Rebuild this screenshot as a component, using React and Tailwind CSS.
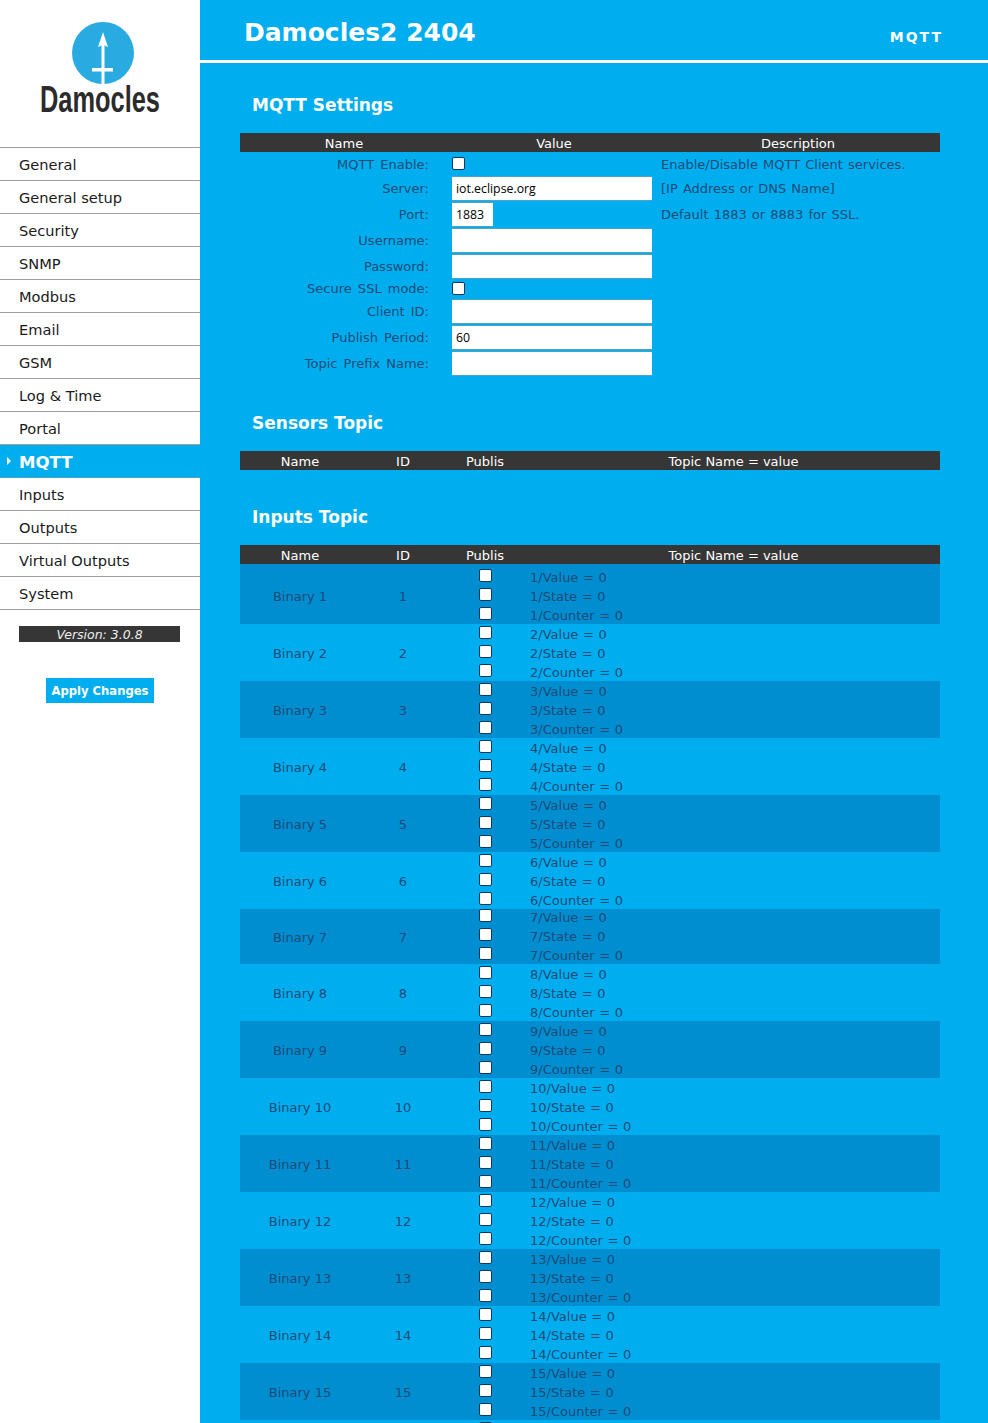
const F = '"DejaVu Sans", sans-serif';

const nav = ['General','General setup','Security','SNMP','Modbus','Email','GSM','Log & Time','Portal'];
const nav2 = ['Inputs','Outputs','Virtual Outputs','System'];

function Logo() {
  return (
    <svg width="122" height="95" viewBox="0 0 122 95" className="block">
      <circle cx="64" cy="31" r="31" fill="#29abe2" />
      <path d="M64 10 L69 25 L65.5 23.5 L65.5 62 L62.5 62 L62.5 23.5 L59 25 Z" fill="#fff" />
      <rect x="53" y="46" width="21" height="3.5" fill="#fff" />
      <text x="1" y="90" textLength="120" lengthAdjust="spacingAndGlyphs" fontFamily='"Liberation Sans", sans-serif' fontWeight="700" fontSize="36" fill="#2b2b2b">Damocles</text>
    </svg>
  );
}

function NavItem({ label }) {
  return (
    <div className="h-[33px] border-b border-[#a0a0a0] pl-[19px] text-[14.6px] leading-[34px] text-[#1a1a1a]">{label}</div>
  );
}

function Sidebar() {
  return (
    <aside className="w-[200px] shrink-0 bg-white">
      <div className="h-[147px] pl-[39px] pt-[22px]"><Logo /></div>
      <div className="border-t border-[#a0a0a0]">
        {nav.map((n) => <NavItem key={n} label={n} />)}
      </div>
      <div className="flex h-[33px] items-center border-b border-[#4aa3c8] bg-[#00aeef] pl-[7px] text-[16.6px] font-bold leading-[33px] text-white">
        <svg width="4" height="8" viewBox="0 0 4 8" className="mr-[8px]"><path d="M0 0 L4 4 L0 8 Z" fill="#fff" /></svg>
        <span className="pt-[3px]">MQTT</span>
      </div>
      {nav2.map((n) => <NavItem key={n} label={n} />)}
      <div className="ml-[19px] mt-[16px] h-[16px] w-[161px] bg-[#363636] text-center text-[12.5px] italic leading-[17px] text-[#eeeeee]">Version: 3.0.8</div>
      <div className="mt-[36px] flex justify-center">
        <div className="h-[25px] w-[108px] whitespace-nowrap bg-[#00aeef] text-center text-[11.6px] font-bold leading-[27px] text-white">Apply Changes</div>
      </div>
    </aside>
  );
}

function Check({ className = '' }) {
  return <span className={`block h-[13px] w-[13px] rounded-[2px] border border-[#12395c] bg-white ${className}`} />;
}

function Input({ value = '', w = 'w-[200px]' }) {
  return (
    <div className={`${w} h-[25px] border-y border-[#4aa3c8] bg-white pl-[4px] text-[12.3px] leading-[24px] text-black`} style={{ fontFamily: '"Open Sans", sans-serif' }}>{value}</div>
  );
}

const settings = [
  { h: 23, label: 'MQTT Enable:', c: true, d: 'Enable/Disable MQTT Client services.' },
  { h: 26, label: 'Server:', v: 'iot.eclipse.org', d: '[IP Address or DNS Name]' },
  { h: 26, label: 'Port:', v: '1883', w: 'w-[41px]', d: 'Default 1883 or 8883 for SSL.' },
  { h: 26, label: 'Username:' },
  { h: 26, label: 'Password:' },
  { h: 19, label: 'Secure SSL mode:', c: true, up: true },
  { h: 26, label: 'Client ID:' },
  { h: 26, label: 'Publish Period:', v: '60' },
  { h: 26, label: 'Topic Prefix Name:' },
];

function Settings() {
  return (
    <div className="w-[700px]">
      <div className="grid h-[19px] grid-cols-[208px_212px_280px] bg-[#363636] text-center text-[13px] leading-[21px] text-white">
        <div>Name</div>
        <div>Value</div>
        <div className="pr-[4px]">Description</div>
      </div>
      {settings.map((r) => (
        <div key={r.label} className="grid grid-cols-[189px_212px_auto] items-center text-[13px] leading-[20px] text-[#1c4b78]" style={{ height: r.h }}>
          <div className={`${r.up ? 'pt-[0px]' : 'pt-[2px]'} text-right [word-spacing:2px]`}>{r.label}</div>
          <div className="pl-[23px]">{r.c ? <Check className={r.up ? 'mb-[1px]' : ''} /> : <Input value={r.v} w={r.w} />}</div>
          <div className="whitespace-nowrap pl-[20px] pt-[2px] [word-spacing:1px]">{r.d}</div>
        </div>
      ))}
    </div>
  );
}

function TopicHeader() {
  return (
    <div className="grid h-[19px] grid-cols-[120px_85px_80px_415px] bg-[#363636] text-center text-[13px] leading-[21px] text-white">
      <div>Name</div><div className="pl-[1px]">ID</div><div>Publis</div><div className="pl-[2px]">Topic Name = value</div>
    </div>
  );
}

function Row({ n, first }) {
  const short = n === 7;
  const items = ['Value', 'State', 'Counter'];
  return (
    <div className={`grid grid-cols-[120px_85px_80px_415px] text-[13px] text-[#1c4b78] ${n % 2 ? 'bg-[#008ed0]' : ''} ${first ? 'pt-[3px]' : ''}`}>
      <div className="flex items-center justify-center pt-[2px]">Binary {n}</div>
      <div className="flex items-center justify-center pl-[1px] pt-[2px]">{n}</div>
      <div className="flex flex-col items-center">
        {items.map((k, i) => (
          <div key={k} className={short && i === 0 ? 'h-[17px]' : 'h-[19px] pt-[2px]'}><Check /></div>
        ))}
      </div>
      <div className="pl-[5px] [word-spacing:0.5px]">
        {items.map((k, i) => (
          <div key={k} className={short && i === 0 ? 'h-[17px] leading-[17px]' : 'h-[19px] leading-[21px]'}>{n}/{k} = 0</div>
        ))}
      </div>
    </div>
  );
}

export default function App() {
  const rows = Array.from({ length: 16 }, (_, i) => i + 1);
  return (
    <div className="flex h-[1423px] w-[988px] overflow-hidden" style={{ fontFamily: F }}>
      <Sidebar />
      <main className="min-w-0 flex-1 bg-[#00aeef]">
        <header className="flex h-[63px] items-start justify-between border-b-[3px] border-white pl-[44px] pr-[45px]">
          <div className="pt-[15px] text-[25px] font-bold leading-[36px] text-white">Damocles2 2404</div>
          <div className="pt-[27px] text-[14px] font-bold leading-[20px] tracking-[2px] text-white">MQTT</div>
        </header>
        <div className="pl-[40px]">
          <h2 className="pl-[12px] pt-[30px] text-[17px] font-bold leading-[24px] text-white">MQTT Settings</h2>
          <div className="mt-[16px]"><Settings /></div>
          <h2 className="pl-[12px] pt-[35px] text-[17px] font-bold leading-[24px] text-white">Sensors Topic</h2>
          <div className="mt-[16px] w-[700px]"><TopicHeader /></div>
          <h2 className="pl-[12px] pt-[35px] text-[17px] font-bold leading-[24px] text-white">Inputs Topic</h2>
          <div className="mt-[16px] w-[700px]">
            <TopicHeader />
            {rows.map((n) => <Row key={n} n={n} first={n === 1} />)}
          </div>
        </div>
      </main>
    </div>
  );
}
